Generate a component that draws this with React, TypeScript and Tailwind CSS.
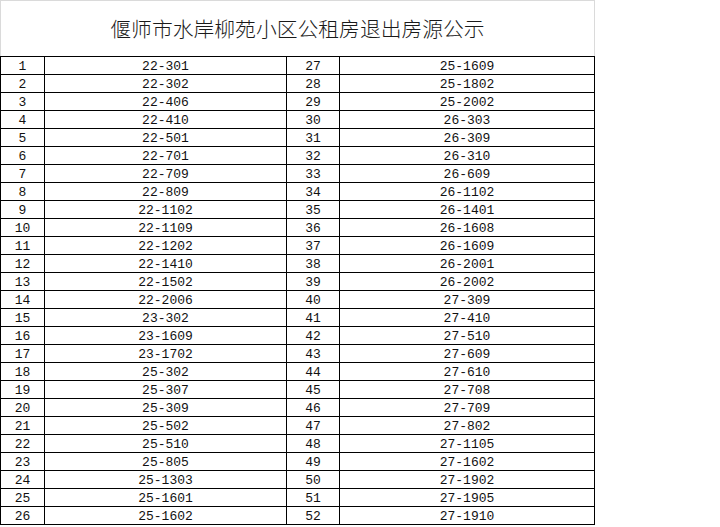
const left = [
  "22-301", "22-302", "22-406", "22-410", "22-501", "22-701", "22-709", "22-809",
  "22-1102", "22-1109", "22-1202", "22-1410", "22-1502", "22-2006", "23-302", "23-1609",
  "23-1702", "25-302", "25-307", "25-309", "25-502", "25-510", "25-805", "25-1303",
  "25-1601", "25-1602",
]

const right = [
  "25-1609", "25-1802", "25-2002", "26-303", "26-309", "26-310", "26-609", "26-1102",
  "26-1401", "26-1608", "26-1609", "26-2001", "26-2002", "27-309", "27-410", "27-510",
  "27-609", "27-610", "27-708", "27-709", "27-802", "27-1105", "27-1602", "27-1902",
  "27-1905", "27-1910",
]

const cell = "h-[18px] pt-[2px] border-r border-b border-black flex items-center justify-center leading-none"

export default function App() {
  return (
    <div className="w-[720px] h-[527px] bg-white overflow-hidden">
      <div className="w-[595px]">
        <div className="h-[56px] border-t border-l border-r border-[#dadada] flex items-center justify-center">
          <h1
            className="text-[20.8px] font-light text-[#1a1a1a] pt-[1px]"
            style={{ fontFamily: '"Noto Sans CJK SC", "Noto Sans", sans-serif' }}
          >
            偃师市水岸柳苑小区公租房退出房源公示
          </h1>
        </div>
        <div
          className="grid grid-cols-[44px_242px_53px_255px] border-t border-l border-black text-[13px] text-[#111]"
          style={{ fontFamily: '"Liberation Mono", "DejaVu Sans Mono", monospace' }}
        >
          {left.map((room, i) => (
            <div key={room} className="contents">
              <div className={cell}>{i + 1}</div>
              <div className={cell}>{room}</div>
              <div className={cell}>{i + 27}</div>
              <div className={cell}>{right[i]}</div>
            </div>
          ))}
        </div>
      </div>
    </div>
  )
}
